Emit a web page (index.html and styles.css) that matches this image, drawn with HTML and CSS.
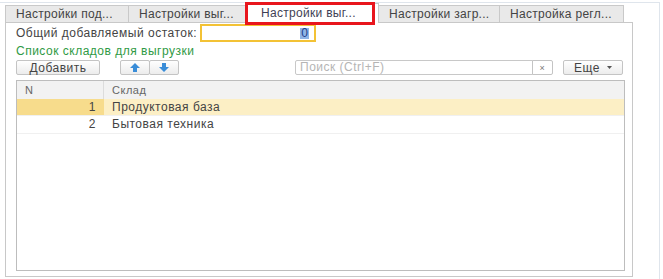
FILE: index.html
```html
<!DOCTYPE html>
<html lang="ru">
<head>
  <meta charset="UTF-8" />
  <title>Настройки выгрузки</title>
  <link rel="stylesheet" href="styles.css">
</head>
<body>
  <div class="window">
    <div class="tabs">
      <div class="tab tab-1">Настройки под...</div>
      <div class="tab tab-2">Настройки выг...</div>
      <div class="tab tab-3 active">Настройки выг...</div>
      <div class="tab tab-4">Настройки загр...</div>
      <div class="tab tab-5">Настройка регл...</div>
      <div class="marker"></div>
    </div>

    <div class="panel">
      <div class="field-row">
        <span class="label">Общий добавляемый остаток:</span>
        <div class="number-input"><span class="sel">0</span></div>
      </div>

      <div class="group-title">Список складов для выгрузки</div>

      <div class="toolbar">
        <button class="btn btn-add">Добавить</button>
        <div class="btn-group">
          <button class="btn btn-icon">
            <svg width="10" height="9" viewBox="0 0 10 9"><path d="M5 0 L10 5 L7 5 L7 9 L3 9 L3 5 L0 5 Z" fill="#3a8dd8"/></svg>
          </button>
          <button class="btn btn-icon">
            <svg width="10" height="9" viewBox="0 0 10 9"><path d="M5 9 L10 4 L7 4 L7 0 L3 0 L3 4 L0 4 Z" fill="#3a8dd8"/></svg>
          </button>
        </div>
        <div class="search">
          <div class="search-box">Поиск (Ctrl+F)</div>
          <button class="btn btn-clear">×</button>
        </div>
        <button class="btn btn-more">Еще
          <svg width="5" height="3" viewBox="0 0 5 3"><path d="M0 0 L5 0 L2.5 3 Z" fill="#555"/></svg>
        </button>
      </div>

      <div class="table">
        <div class="t-row t-head">
          <div class="c-num">N</div>
          <div class="c-name">Склад</div>
        </div>
        <div class="t-row current">
          <div class="c-num">1</div>
          <div class="c-name">Продуктовая база</div>
        </div>
        <div class="t-row">
          <div class="c-num">2</div>
          <div class="c-name">Бытовая техника</div>
        </div>
      </div>
    </div>
  </div>
</body>
</html>
```

FILE: styles.css
```css
html, body {
  margin: 0;
  padding: 0;
  background: #fff;
  font-family: "Liberation Sans", Arial, sans-serif;
  font-size: 12px;
  letter-spacing: 0.5px;
  color: #444;
}

.window {
  width: 660px;
  height: 277px;
  margin-top: 2px;
  border-top: 1px solid #dfe5ec;
  border-right: 1px solid #dfe5ec;
  padding: 2px 0 0 5px;
  box-sizing: border-box;
}

/* tabs */
.tabs {
  position: relative;
  display: flex;
  align-items: flex-end;
  height: 17px;
}

.tab {
  height: 16px;
  line-height: 16px;
  box-sizing: content-box;
  border: 1px solid #c9c9c9;
  border-bottom: none;
  background: #e9e9e9;
  padding-left: 10px;
  margin-left: -1px;
  color: #444;
  letter-spacing: 0.3px;
  white-space: nowrap;
  overflow: hidden;
}

.tab-1 { width: 112px; margin-left: 0; }
.tab-2 { width: 106px; }
.tab-3 { width: 122px; }
.tab-4 { width: 110px; }
.tab-5 { width: 113px; }

.tab.active {
  background: #fff;
  height: 19px;
  line-height: 19px;
  padding-left: 15px;
  width: 117px;
  position: relative;
  top: 1px;
  color: #3f3f55;
}

.marker {
  position: absolute;
  left: 240px;
  top: -3px;
  width: 124px;
  height: 17px;
  border: 3px solid #e8161d;
}

/* panel */
.panel {
  display: flex;
  flex-direction: column;
  width: 628px;
  height: 255px;
  box-sizing: border-box;
  border: 1px solid #c8c8c8;
  padding: 1px 9px 5px 10px;
}

.field-row {
  display: flex;
  align-items: center;
  height: 18px;
}

.label {
  width: 184px;
  white-space: nowrap;
}

.number-input {
  width: 116px;
  height: 18px;
  box-sizing: border-box;
  border: 2px solid #f3c235;
  display: flex;
  align-items: center;
  justify-content: flex-end;
  padding-right: 5px;
}

.sel {
  background: #8fb4e6;
  color: #1d3f8a;
  line-height: 11px;
  padding: 0 1px;
  letter-spacing: 0;
}

.group-title {
  margin-top: 2px;
  line-height: 14px;
  color: #2f9a45;
}

/* toolbar */
.toolbar {
  display: flex;
  align-items: center;
  margin-top: 2px;
  height: 15px;
}

.btn {
  height: 15px;
  box-sizing: border-box;
  border: 1px solid #c4c4c4;
  border-radius: 2px;
  background: linear-gradient(#ffffff, #ececec);
  font-family: inherit;
  font-size: 12px;
  letter-spacing: 0.5px;
  color: #444;
  padding: 0;
  display: flex;
  align-items: center;
  justify-content: center;
}

.btn-add {
  width: 84px;
}

.btn-group {
  display: flex;
  margin-left: 20px;
}

.btn-icon {
  width: 30px;
}

.btn-icon + .btn-icon {
  margin-left: -1px;
}

.search {
  display: flex;
  margin-left: auto;
}

.search-box {
  width: 238px;
  height: 15px;
  line-height: 13px;
  box-sizing: border-box;
  border: 1px solid #c8c8c8;
  border-radius: 2px 0 0 2px;
  padding-left: 4px;
  color: #b5b5b5;
}

.btn-clear {
  width: 21px;
  margin-left: -1px;
  border-radius: 0 2px 2px 0;
  font-size: 9px;
  color: #777;
  background: #fff;
}

.btn-more {
  width: 60px;
  margin-left: 10px;
  gap: 7px;
}

/* table */
.table {
  flex: 1;
  margin-top: 5px;
  border: 1px solid #bdbdbd;
  width: 609px;
  box-sizing: border-box;
}

.t-row {
  display: flex;
  height: 17px;
  line-height: 17px;
  border-bottom: 1px solid #f0f0f0;
  color: #444;
}

.t-head {
  height: 18px;
  line-height: 18px;
  background: #f2f2f2;
  border-bottom: none;
  color: #666;
  font-size: 11px;
}

.current {
  height: 16px;
  line-height: 16px;
}

.c-num {
  width: 87px;
  box-sizing: border-box;
  padding-right: 8px;
  text-align: right;
}

.t-head .c-num {
  text-align: left;
  padding-left: 8px;
  border-right: 1px solid #dcdcdc;
}

.c-name {
  flex: 1;
  padding-left: 8px;
}

.current {
  background: #fcefc5;
}

.current .c-num {
  background: #f7dc8c;
}
```
